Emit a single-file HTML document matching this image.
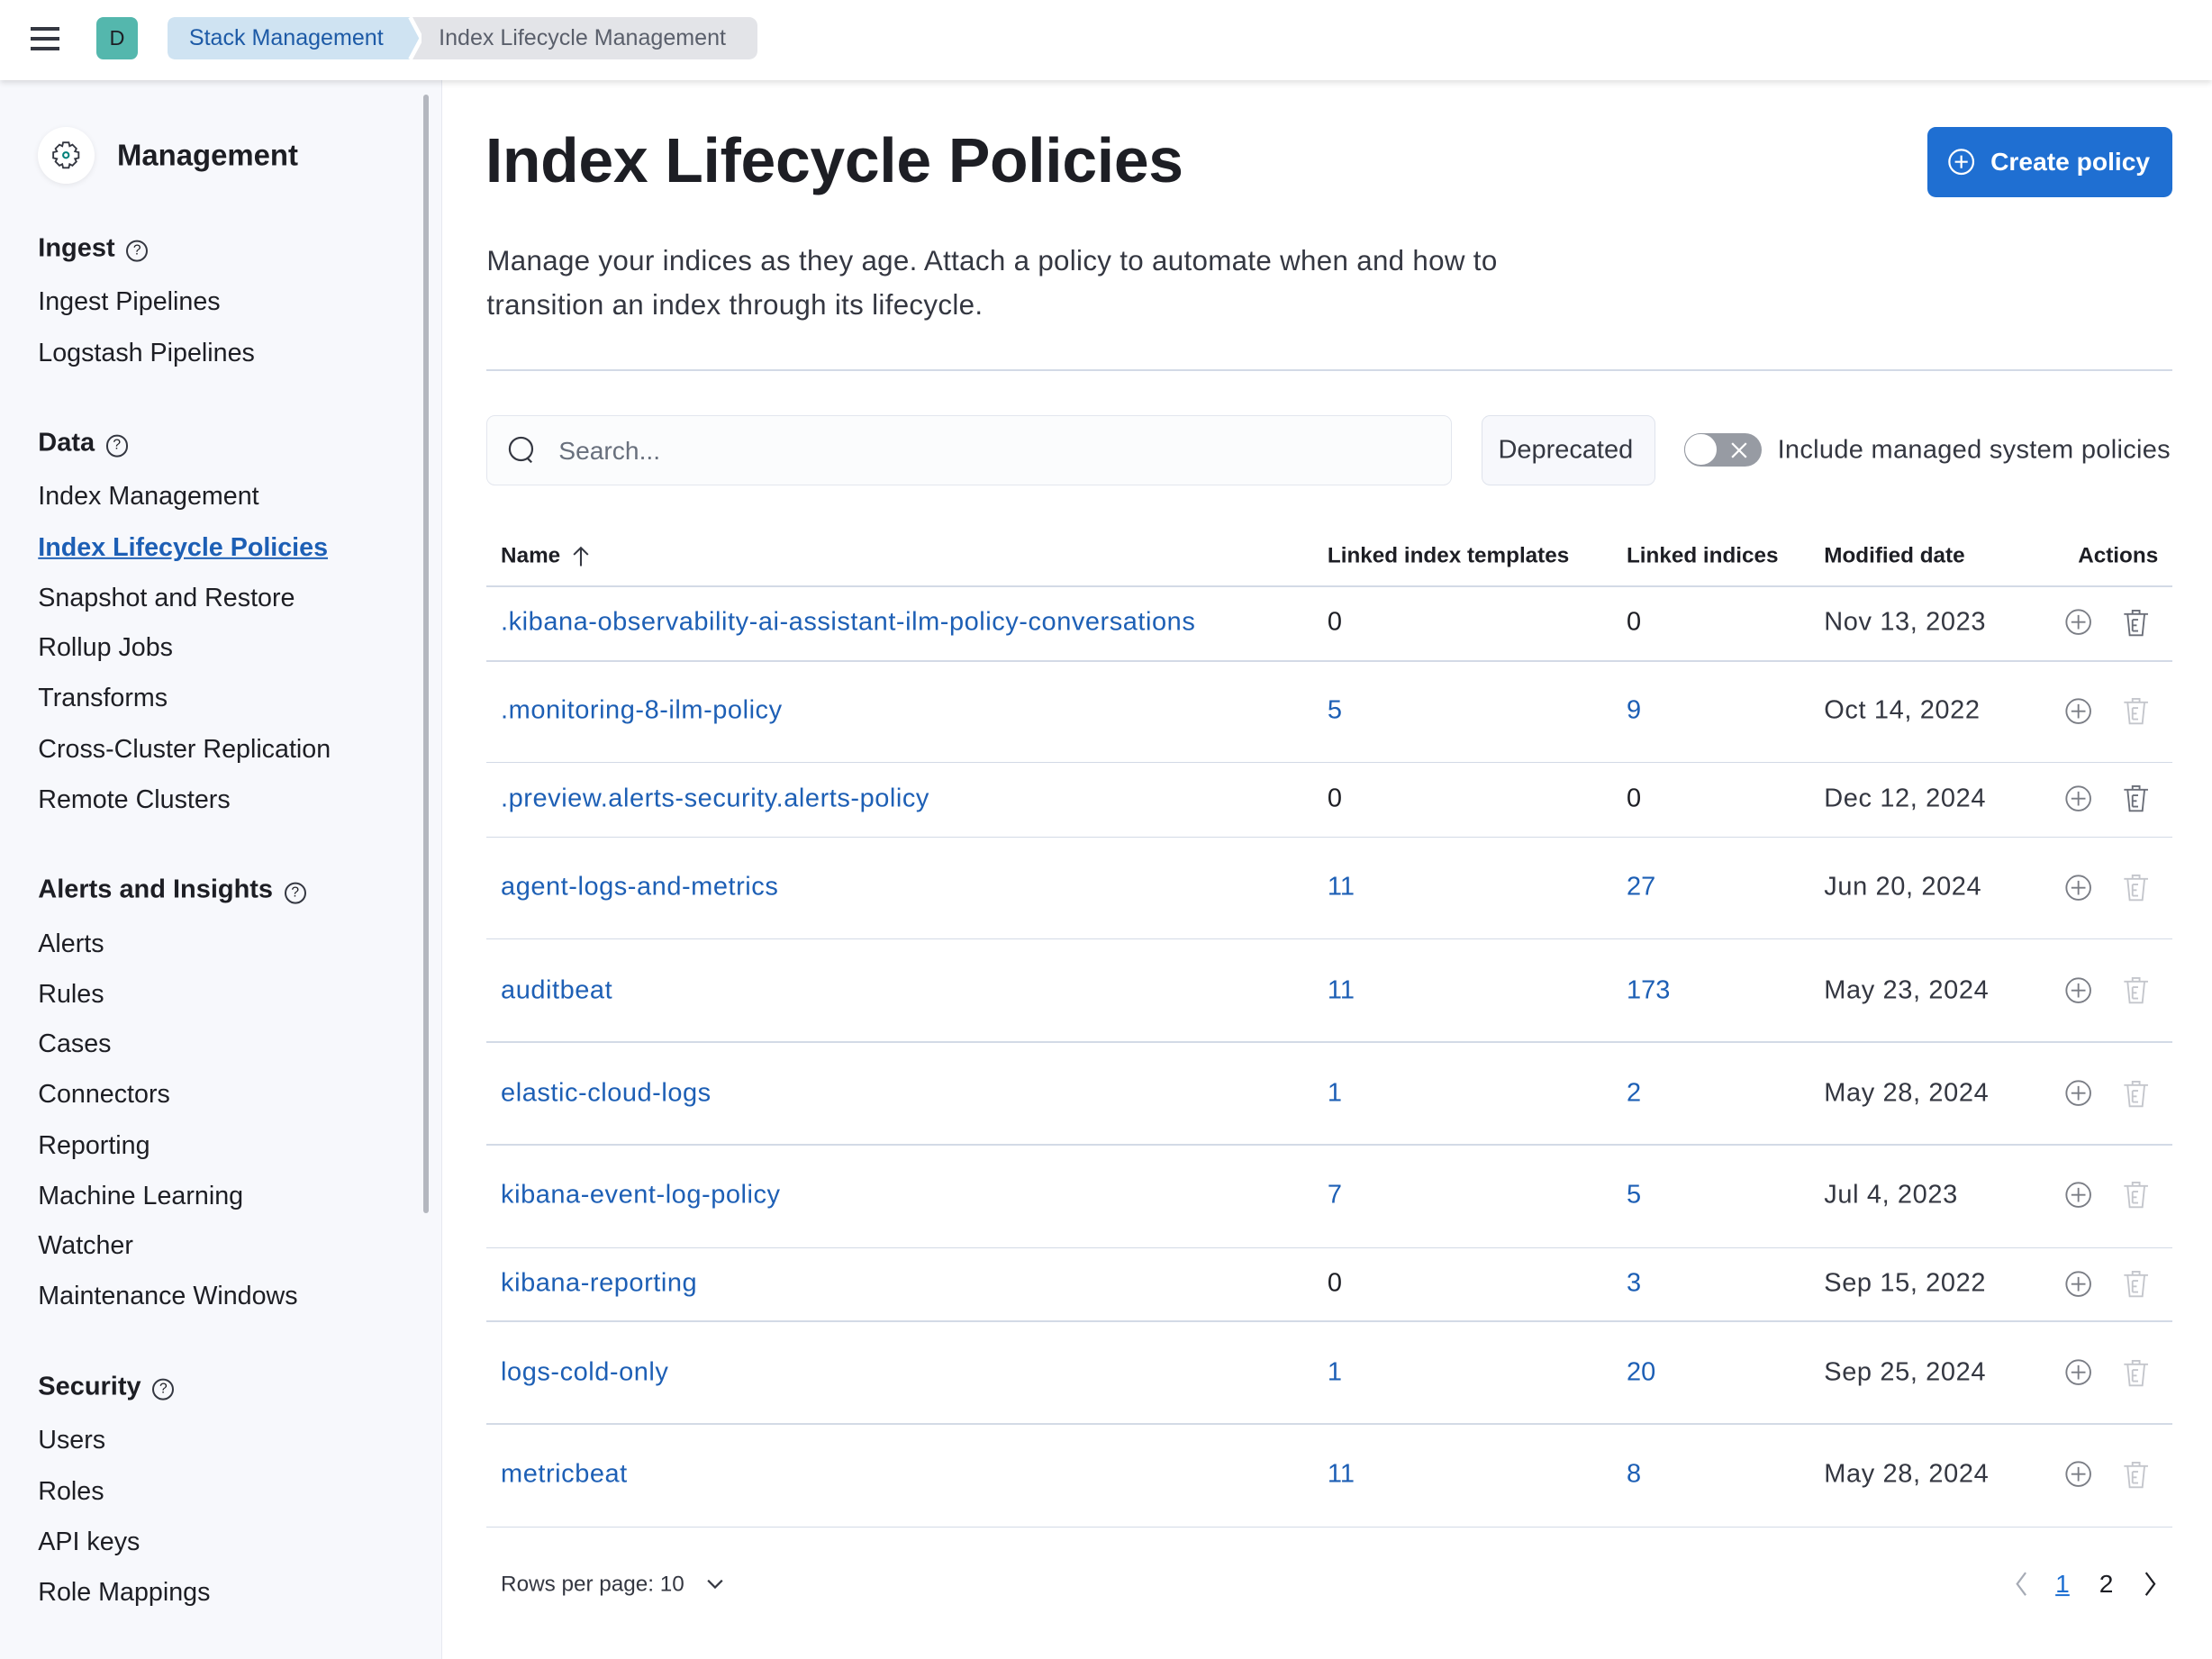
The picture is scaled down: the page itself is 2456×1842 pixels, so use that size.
<!DOCTYPE html>
<html><head><meta charset="utf-8"><style>
html,body{margin:0;padding:0;width:2456px;height:1842px;overflow:hidden;background:#fff}
#w{zoom:1.56633;width:1568px;height:1176px;position:relative;font-family:"Liberation Sans",sans-serif;color:#1d1e24}
.t{position:absolute;transform:translateY(-50%);white-space:nowrap;line-height:1.2}
.a{position:absolute}
.lnk{color:#1d5fb5}
.sb{font-size:18.3px;color:#1d1e24}
.sh{font-size:18.5px;font-weight:bold}
.q{display:inline-block;width:13px;height:13px;border:1.3px solid #343741;border-radius:50%;font-size:10px;text-align:center;line-height:13px;font-weight:normal;margin-left:8px;vertical-align:1px}
.row{position:absolute;left:345px;width:1195px;height:1px;background:#d3dae6}
.c{font-size:18.5px}
.nm{font-size:18.5px;letter-spacing:0.35px}
</style></head><body><div id="w">
<div class="a" style="left:0;top:0;width:1568px;height:57px;background:#fff;box-shadow:0 2px 4px rgba(0,0,0,.12);z-index:2">
 <div class="a" style="left:22px;top:19px;width:20px;height:2.5px;background:#343741"></div>
 <div class="a" style="left:22px;top:26px;width:20px;height:2.5px;background:#343741"></div>
 <div class="a" style="left:22px;top:33px;width:20px;height:2.5px;background:#343741"></div>
 <div class="a" style="left:68px;top:12px;width:30px;height:30px;background:#54b7ad;border-radius:5px;text-align:center;line-height:30px;font-size:15px">D</div>
 <div class="a" style="left:119px;top:12px;width:418px;height:30px;background:#e3e4e8;border-radius:6px"></div>
 <svg class="a" style="left:119px;top:12px" width="180" height="30"><path d="M6 0H172L180 15L172 30H6Q0 30 0 24V6Q0 0 6 0Z" fill="#cfe3f2"/><path d="M172 0L180 15L172 30" stroke="#fff" stroke-width="3" fill="none"/></svg>
 <div class="t" style="left:134px;top:27px;font-size:16px;color:#1d5aa6">Stack Management</div>
 <div class="t" style="left:311px;top:27px;font-size:16px;color:#5a5f6b">Index Lifecycle Management</div>
</div>
<div class="a" style="left:0;top:57px;width:313px;height:1119px;background:#f7f8fc;border-right:1px solid #e6e9f0"></div>
<div class="a" style="left:300px;top:67px;width:4px;height:793px;background:#b4b7bf;border-radius:2px"></div>
<div class="a" style="left:27px;top:90px;width:40px;height:40px;background:#fff;border-radius:50%;box-shadow:0 1px 4px rgba(0,0,0,.08)"></div>
<svg class="a" style="left:36px;top:99px" width="22" height="22" viewBox="0 0 22 22"><path d="M9 2h4l.6 2.6 2-1 2.8 2.8-1 2 2.6.6v4l-2.6.6 1 2-2.8 2.8-2-1L13 20H9l-.6-2.6-2 1-2.8-2.8 1-2L2 13V9l2.6-.6-1-2 2.8-2.8 2 1z" fill="none" stroke="#343741" stroke-width="1.2"/><circle cx="11" cy="11" r="2" fill="none" stroke="#00807a" stroke-width="1.3"/></svg>
<div class="t" style="left:83px;top:110px;font-size:21px;font-weight:bold">Management</div>
<div class="t sh" style="left:27px;top:176px">Ingest<span class="q">?</span></div>
<div class="t sb" style="left:27px;top:214px">Ingest Pipelines</div>
<div class="t sb" style="left:27px;top:250px">Logstash Pipelines</div>
<div class="t sh" style="left:27px;top:314px">Data<span class="q">?</span></div>
<div class="t sb" style="left:27px;top:352px">Index Management</div>
<div class="t sb" style="left:27px;top:388px;color:#1d5fb5;font-weight:bold;text-decoration:underline">Index Lifecycle Policies</div>
<div class="t sb" style="left:27px;top:424px">Snapshot and Restore</div>
<div class="t sb" style="left:27px;top:459px">Rollup Jobs</div>
<div class="t sb" style="left:27px;top:495px">Transforms</div>
<div class="t sb" style="left:27px;top:531px">Cross-Cluster Replication</div>
<div class="t sb" style="left:27px;top:567px">Remote Clusters</div>
<div class="t sh" style="left:27px;top:631px">Alerts and Insights<span class="q">?</span></div>
<div class="t sb" style="left:27px;top:669px">Alerts</div>
<div class="t sb" style="left:27px;top:705px">Rules</div>
<div class="t sb" style="left:27px;top:740px">Cases</div>
<div class="t sb" style="left:27px;top:776px">Connectors</div>
<div class="t sb" style="left:27px;top:812px">Reporting</div>
<div class="t sb" style="left:27px;top:848px">Machine Learning</div>
<div class="t sb" style="left:27px;top:883px">Watcher</div>
<div class="t sb" style="left:27px;top:919px">Maintenance Windows</div>
<div class="t sh" style="left:27px;top:983px">Security<span class="q">?</span></div>
<div class="t sb" style="left:27px;top:1021px">Users</div>
<div class="t sb" style="left:27px;top:1057px">Roles</div>
<div class="t sb" style="left:27px;top:1093px">API keys</div>
<div class="t sb" style="left:27px;top:1129px">Role Mappings</div>
<div class="t" style="left:344px;top:114px;font-size:44.5px;font-weight:bold;letter-spacing:-0.2px">Index Lifecycle Policies</div>
<div class="a" style="left:1366px;top:90px;width:174px;height:50px;background:#1f6fd2;border-radius:6px"></div>
<svg class="a" style="left:1380px;top:105px" width="20" height="20"><circle cx="10" cy="10" r="8.5" fill="none" stroke="#fff" stroke-width="1.4"/><path d="M10 5.5v9M5.5 10h9" stroke="#fff" stroke-width="1.4"/></svg>
<div class="t" style="left:1411px;top:115px;font-size:18px;font-weight:bold;color:#fff">Create policy</div>
<div class="a" style="left:345px;top:170px;font-size:20px;line-height:31px;color:#343741;width:775px;letter-spacing:0.2px">Manage your indices as they age. Attach a policy to automate when and how to transition an index through its lifecycle.</div>
<div class="row" style="top:262px"></div>
<div class="a" style="left:345px;top:294px;width:683px;height:49px;background:#fbfcfd;border:1px solid #e3e6ee;border-radius:6px"></div>
<svg class="a" style="left:359px;top:308px" width="24" height="24"><circle cx="10.5" cy="10.5" r="8" fill="none" stroke="#343741" stroke-width="1.4"/><path d="M15 17l3 3" stroke="#343741" stroke-width="1.4"/></svg>
<div class="t" style="left:396px;top:320px;font-size:18px;color:#69707d">Search...</div>
<div class="a" style="left:1050px;top:294px;width:122px;height:49px;background:#f7f8fc;border:1px solid #dfe3ec;border-radius:6px"></div>
<div class="t" style="left:1062px;top:319px;font-size:18.5px;color:#343741">Deprecated</div>
<div class="a" style="left:1194px;top:307px;width:55px;height:24px;background:#979ba3;border-radius:12px"></div>
<div class="a" style="left:1194px;top:307px;width:22px;height:22px;background:#fff;border:1px solid #979ba3;border-radius:50%"></div>
<svg class="a" style="left:1226px;top:312px" width="14" height="14"><path d="M2 2l10 10M12 2L2 12" stroke="#fff" stroke-width="1.4"/></svg>
<div class="t" style="left:1260px;top:319px;font-size:18.5px;color:#343741;letter-spacing:0.2px">Include managed system policies</div>
<div class="t" style="left:355px;top:394px;font-size:15.5px;font-weight:bold">Name</div>
<svg class="a" style="left:405px;top:386px" width="14" height="16"><path d="M7 15V2M2 7l5-5 5 5" fill="none" stroke="#343741" stroke-width="1.3"/></svg>
<div class="t" style="left:941px;top:394px;font-size:15.5px;font-weight:bold">Linked index templates</div>
<div class="t" style="left:1153px;top:394px;font-size:15.5px;font-weight:bold">Linked indices</div>
<div class="t" style="left:1293px;top:394px;font-size:15.5px;font-weight:bold">Modified date</div>
<div class="t" style="left:1473px;top:394px;font-size:15.5px;font-weight:bold">Actions</div>
<div class="row" style="top:415px"></div>
<div class="row" style="top:468px"></div><div class="row" style="top:540px"></div><div class="row" style="top:593px"></div><div class="row" style="top:665px"></div><div class="row" style="top:738px"></div><div class="row" style="top:811px"></div><div class="row" style="top:884px"></div><div class="row" style="top:936px"></div><div class="row" style="top:1009px"></div><div class="row" style="top:1082px"></div>
<div id="rows"></div>
<script>
var d=[[441,".kibana-observability-ai-assistant-ilm-policy-conversations","0","0","Nov 13, 2023",1],
[504,".monitoring-8-ilm-policy","5","9","Oct 14, 2022",0],
[566,".preview.alerts-security.alerts-policy","0","0","Dec 12, 2024",1],
[629,"agent-logs-and-metrics","11","27","Jun 20, 2024",0],
[702,"auditbeat","11","173","May 23, 2024",0],
[775,"elastic-cloud-logs","1","2","May 28, 2024",0],
[847,"kibana-event-log-policy","7","5","Jul 4, 2023",0],
[910,"kibana-reporting","0","3","Sep 15, 2022",0],
[973,"logs-cold-only","1","20","Sep 25, 2024",0],
[1045,"metricbeat","11","8","May 28, 2024",0]];
var h="";
d.forEach(function(r){var y=r[0];
function n(v,x){return '<div class="t c'+(v=="0"?'':' lnk')+'" style="left:'+x+'px;top:'+y+'px">'+v+'</div>';}
var tc=r[5]?'#6a6e78':'#c4c6cc';
h+='<div class="t nm lnk" style="left:355px;top:'+y+'px">'+r[1]+'</div>'+n(r[2],941)+n(r[3],1153)+
'<div class="t c" style="left:1293px;top:'+y+'px;color:#343741;letter-spacing:0.4px">'+r[4]+'</div>'+
'<svg class="a" style="left:1463px;top:'+(y-10)+'px" width="20" height="20"><circle cx="10" cy="10" r="8.5" fill="none" stroke="#7a7d85" stroke-width="1.2"/><path d="M10 5v10M5 10h10" stroke="#7a7d85" stroke-width="1.2"/></svg>'+
'<svg class="a" style="left:1504px;top:'+(y-11)+'px" width="20" height="22" viewBox="0 0 20 22"><path d="M1.5 5h17M7.5 5V2.5h5V5M4 5l1.5 15h9L16 5M7.5 9h4M7.5 13h3M7.5 17h4M7.5 9v8" fill="none" stroke="'+tc+'" stroke-width="1.2"/></svg>';});
document.getElementById('rows').innerHTML=h;
</script>
<div class="t" style="left:355px;top:1123px;font-size:15.5px;color:#343741">Rows per page: 10</div>
<svg class="a" style="left:500px;top:1117px" width="14" height="12"><path d="M2 3l5 5 5-5" fill="none" stroke="#343741" stroke-width="1.4"/></svg>
<svg class="a" style="left:1427px;top:1113px" width="12" height="20"><path d="M9 2L3 10l6 8" fill="none" stroke="#a6abb5" stroke-width="1.4"/></svg>
<div class="t" style="left:1457px;top:1123px;font-size:18px;color:#1d6fd2;text-decoration:underline">1</div>
<div class="t" style="left:1488px;top:1123px;font-size:18px;color:#1d1e24">2</div>
<svg class="a" style="left:1518px;top:1113px" width="12" height="20"><path d="M3 2l6 8-6 8" fill="none" stroke="#1d1e24" stroke-width="1.4"/></svg>
</div></body></html>
